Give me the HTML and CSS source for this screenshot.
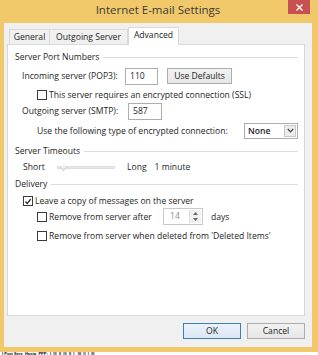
FILE: index.html
```html
<!DOCTYPE html>
<html>
<head>
<meta charset="utf-8">
<link rel="stylesheet" href="styles.css">
</head>
<body>
<div class="window">
  <div class="titlebar">
    <span></span>
    <span class="title">Internet E-mail Settings</span>
    <span class="close"><svg width="7" height="7" viewBox="0 0 7 7"><path d="M0.5 0.5L6.5 6.5M6.5 0.5L0.5 6.5" stroke="#fff" stroke-width="1.4"/></svg></span>
  </div>
  <div class="client">
    <div class="tabs">
      <div class="tab t-general">General</div>
      <div class="tab t-outgoing">Outgoing Server</div>
      <div class="tab t-advanced active">Advanced</div>
    </div>
    <div class="panel">
      <div class="group"><span>Server Port Numbers</span><i></i></div>
      <div class="row r-incoming">
        <span class="lbl lbl-in">Incoming server (POP3):</span>
        <span class="input in-in">110</span>
        <span class="btn btn-defaults">Use Defaults</span>
      </div>
      <div class="row r-ssl lvl2">
        <span class="cb"></span><span class="cbtext">This server requires an encrypted connection (SSL)</span>
      </div>
      <div class="row r-outgoing">
        <span class="lbl lbl-out">Outgoing server (SMTP):</span>
        <span class="input in-out">587</span>
      </div>
      <div class="row r-follow lvl2">
        <span>Use the following type of encrypted connection:</span>
        <span class="select"><span class="sel-val">None</span><span class="sel-btn"><svg width="7" height="5" viewBox="0 0 7 5"><path d="M0.8 1L3.5 3.8L6.2 1" fill="none" stroke="#444" stroke-width="1.2"/></svg></span></span>
      </div>
      <div class="group g-timeouts"><span>Server Timeouts</span><i></i></div>
      <div class="row r-short lvl1b">
        <span class="lbl-short">Short</span>
        <span class="slider"><span class="thumb"></span></span>
        <span class="long">Long</span>
        <span class="minute">1 minute</span>
      </div>
      <div class="group g-delivery"><span>Delivery</span><i></i></div>
      <div class="row r-leave lvl1b">
        <span class="cb checked"><svg width="9" height="9" viewBox="0 0 9 9"><path d="M1.6 4.6L3.6 6.8L7.6 1.8" fill="none" stroke="#222" stroke-width="1.5"/></svg></span><span class="cbtext">Leave a copy of messages on the server</span>
      </div>
      <div class="row r-after lvl2">
        <span class="cb"></span><span class="cbtext lbl-after">Remove from server after</span>
        <span class="spinner"><span class="spin-val">14</span><span class="spin-btns"><svg width="5" height="3" viewBox="0 0 5 3"><path d="M0 3L2.5 0L5 3Z" fill="#666"/></svg><svg width="5" height="3" viewBox="0 0 5 3"><path d="M0 0L2.5 3L5 0Z" fill="#666"/></svg></span></span>
        <span class="days">days</span>
      </div>
      <div class="row r-when lvl2">
        <span class="cb"></span><span class="cbtext">Remove from server when deleted from 'Deleted Items'</span>
      </div>
    </div>
    <div class="buttons">
      <span class="btn btn-ok">OK</span>
      <span class="btn btn-cancel">Cancel</span>
    </div>
  </div>
</div>
<div class="strip">l Post Serv  Hostg  PPP:  l  lll  ll  lll  ll  l   lll  ll  l  lll</div>
</body>
</html>
```

FILE: styles.css
```css
* { box-sizing: border-box; margin: 0; padding: 0; }
html, body { width: 318px; height: 355px; overflow: hidden; background: #fff; }
body { font-family: "Open Sans", "Noto Sans", sans-serif; font-size: 8.6px; color: #1e1e1e; }

.window {
  height: 352px;
  background: #f1c96a;
  display: flex;
  flex-direction: column;
  padding: 0 6px 5px 4px;
}
.titlebar {
  height: 23px;
  display: grid;
  grid-template-columns: 1fr auto 1fr;
  align-items: start;
}
.title { font-size: 11.5px; line-height: 20px; color: #3a3a3a; white-space: nowrap; }
.close {
  justify-self: end;
  margin-right: 2px;
  width: 22px;
  height: 14px;
  background: #c75050;
  display: flex;
  align-items: center;
  justify-content: center;
}

.client {
  flex: 1;
  background: #f0f0f0;
  padding: 4px 7px 0 3px;
  display: flex;
  flex-direction: column;
}
.tabs { display: flex; align-items: flex-end; height: 17px; padding-left: 2px; }
.tab {
  height: 15px;
  border: 1px solid #d9d9d9;
  border-bottom: none;
  background: #f0f0f0;
  text-align: center;
  line-height: 14px;
  white-space: nowrap;
}
.t-general { width: 41px; }
.t-outgoing { width: 78px; border-left: none; }
.t-advanced { width: 51px; }
.tab.active {
  height: 18px;
  margin-bottom: -1px;
  background: #fff;
  position: relative;
  z-index: 1;
  line-height: 15px;
}

.panel {
  height: 272px;
  background: #fff;
  border: 1px solid #d9d9d9;
  padding: 5px 6px 0 7px;
  display: flex;
  flex-direction: column;
}
.group { display: flex; align-items: center; height: 14px; gap: 4px; white-space: nowrap; }
.group i { flex: 1; height: 1px; background: #dcdcdc; }
.g-timeouts { margin-top: 5px; }
.g-delivery { margin-top: 3px; }

.row { display: flex; align-items: center; white-space: nowrap; }
.lvl2 { padding-left: 22px; }
.lvl1b { padding-left: 8px; }

.r-incoming { margin-top: 3px; height: 18px; padding-left: 7px; }
.r-ssl { margin-top: 3px; height: 14px; }
.r-outgoing { margin-top: 0; height: 18px; padding-left: 7px; }
.r-follow { margin-top: 2px; height: 17px; }
.r-short { margin-top: 2px; height: 14px; }
.r-leave { margin-top: 3px; height: 14px; }
.r-after { margin-top: 0; height: 17px; }
.r-when { margin-top: 4px; height: 14px; }

.lbl-in { width: 103px; }
.lbl-out { width: 106px; }
.input {
  height: 17px;
  border: 1px solid #abadb3;
  background: #fff;
  padding-left: 4px;
  line-height: 15px;
}
.in-in { width: 33px; }
.in-out { width: 34px; }

.btn {
  height: 16px;
  border: 1px solid #adadad;
  background: linear-gradient(#f2f2f2, #e6e6e6);
  text-align: center;
  line-height: 14px;
  display: inline-block;
}
.btn-defaults { width: 65px; margin-left: 9px; }

.cb {
  width: 10px;
  height: 10px;
  border: 1px solid #3a3a3a;
  background: #fff;
  display: flex;
  align-items: center;
  justify-content: center;
  flex: none;
}
.cb svg { display: block; }
.cbtext { margin-left: 2px; }

.select {
  margin-left: auto;
  width: 54px;
  height: 16px;
  border: 1px solid #abadb3;
  display: flex;
  align-items: stretch;
  background: #fff;
}
.sel-val { flex: 1; padding-left: 3px; line-height: 14px; font-weight: 600; }
.sel-btn {
  width: 12px;
  margin: 1px;
  border: 1px solid #c8c8c8;
  background: #ececec;
  display: flex;
  align-items: center;
  justify-content: center;
}

.lbl-short { width: 34px; }
.slider {
  width: 58px;
  height: 3px;
  background: #e6e6e6;
  border: 1px solid #dedede;
  display: flex;
  align-items: center;
  padding-left: 3px;
}
.thumb {
  width: 5px;
  height: 5px;
  border-right: 1px solid #cfcfcf;
  border-bottom: 1px solid #cfcfcf;
  transform: rotate(45deg);
  margin-top: 1px;
  background: #f2f2f2;
}
.long { margin-left: 12px; }
.minute { margin-left: 8px; }

.lbl-after { width: 114px; }
.spinner {
  width: 40px;
  height: 17px;
  border: 1px solid #c9c9c9;
  display: flex;
  align-items: stretch;
}
.spin-val { flex: 1; padding-left: 6px; line-height: 15px; color: #8c8c8c; }
.spin-btns {
  width: 12px;
  margin: 1px;
  border-left: 1px solid #dcdcdc;
  background: #f0f0f0;
  display: flex;
  flex-direction: column;
  align-items: center;
  justify-content: space-evenly;
}
.spin-btns svg { display: block; }
.days { margin-left: 8px; }

.buttons {
  margin-top: 7px;
  display: flex;
  justify-content: flex-end;
  gap: 6px;
}
.btn-ok, .btn-cancel { width: 58px; }
.btn-ok { border-color: #3c7fb1; background: linear-gradient(#eaf2fa, #dbe8f5); }

.strip {
  height: 3px;
  font-family: "Liberation Sans", sans-serif;
  font-weight: bold;
  font-size: 4px;
  line-height: 3px;
  color: #000;
  white-space: pre;
  padding-left: 2px;
}
```
